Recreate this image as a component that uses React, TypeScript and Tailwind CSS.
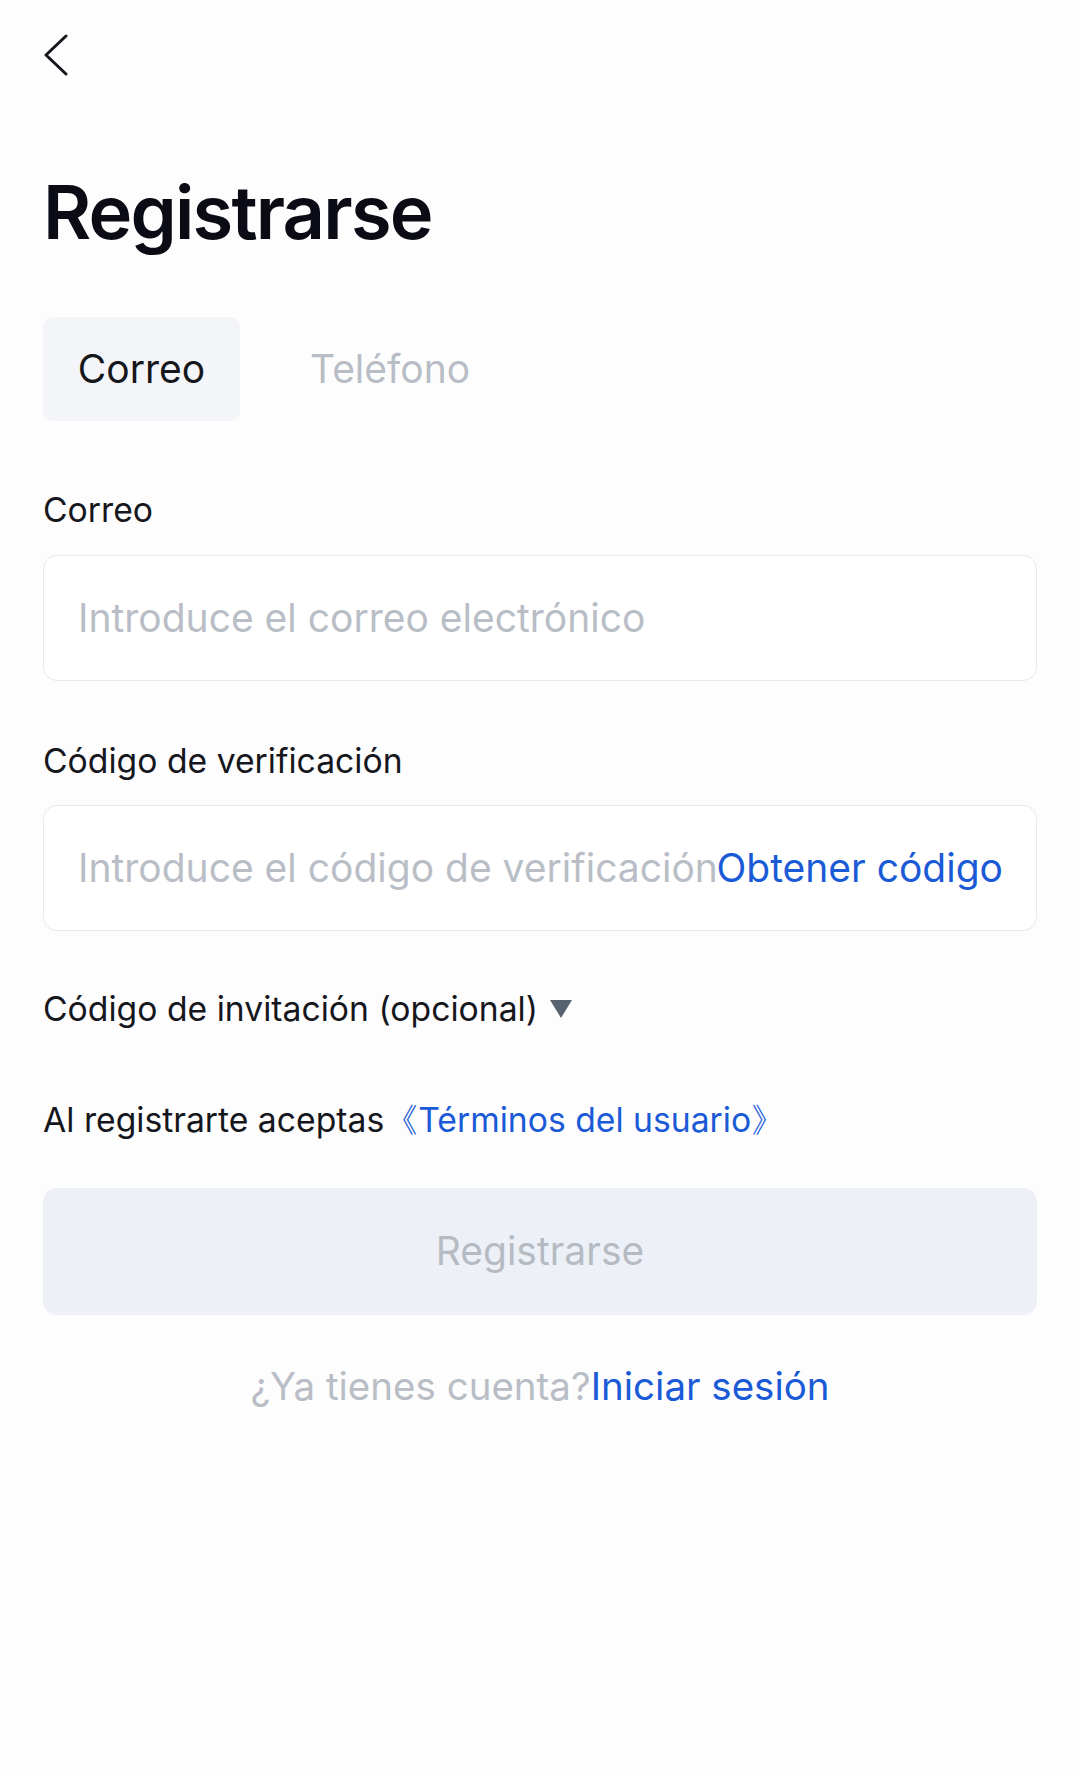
import { useState } from 'react'

const font = { fontFamily: 'Inter, "Noto Sans", sans-serif' }

export default function App() {
  const [tab, setTab] = useState<'email' | 'phone'>('email')

  const labelClass = 'h-[40px] text-[33.7px] leading-[40px] text-[#15171c]'
  const boxClass =
    'flex h-[126px] items-center rounded-[14px] border border-[#e6e8ec] bg-white pl-[34px] pr-[33px]'
  const inputClass =
    'min-w-0 flex-1 bg-transparent text-[39px] text-[#15171c] outline-none placeholder:text-[#b9bec6]'

  return (
    <div className="min-h-[1777px] bg-[#fdfdfe] px-[43px]" style={font}>
      {/* volver */}
      <div className="pt-[34px]">
        <svg width="26" height="42" viewBox="0 0 26 42" fill="none">
          <path
            d="M23 2 L3 21 L23 40"
            stroke="#15171c"
            strokeWidth="3"
            strokeLinecap="round"
            strokeLinejoin="round"
          />
        </svg>
      </div>

      <h1 className="mt-[91px] h-[90px] text-[74px] font-semibold leading-[90px] tracking-[-1.8px] text-[#0a0b14]">
        Registrarse
      </h1>

      {/* pestañas */}
      <div className="mt-[60px] flex items-center">
        <button
          onClick={() => setTab('email')}
          className={`h-[104px] w-[197px] rounded-[10px] text-[39px] ${
            tab === 'email' ? 'bg-[#f3f5f8] text-[#15171c]' : 'text-[#b9bdc5]'
          }`}
        >
          Correo
        </button>
        <button
          onClick={() => setTab('phone')}
          className={`ml-[32px] h-[104px] rounded-[10px] px-[38px] text-[39px] ${
            tab === 'phone' ? 'bg-[#f3f5f8] text-[#15171c]' : 'text-[#b9bdc5]'
          }`}
        >
          Teléfono
        </button>
      </div>

      <div className={`mt-[69px] ${labelClass}`}>Correo</div>
      <div className={`mt-[25px] ${boxClass}`}>
        <input
          className={inputClass}
          placeholder="Introduce el correo electrónico"
          style={font}
        />
      </div>

      <div className={`mt-[60px] ${labelClass}`}>Código de verificación</div>
      <div className={`mt-[24px] ${boxClass}`}>
        <input
          className={inputClass}
          placeholder="Introduce el código de verificación"
          style={font}
        />
        <span className="whitespace-nowrap text-[39px] text-[#1a5ad6]">
          Obtener código
        </span>
      </div>

      <div className={`mt-[58px] flex items-center ${labelClass}`}>
        Código de invitación (opcional)
        <svg className="ml-[11px]" width="24" height="20" viewBox="0 0 24 20">
          <path d="M1 1 H23 L12 19 Z" fill="#586370" />
        </svg>
      </div>

      <div className={`mt-[71px] ${labelClass}`}>
        Al registrarte aceptas
        <span className="text-[#1a5ad6]">《Términos del usuario》</span>
      </div>

      <button className="mt-[48px] flex h-[127px] w-full items-center justify-center rounded-[14px] bg-[#edf1f7] text-[39px] text-[#b6bbc3]">
        Registrarse
      </button>

      <div className="mt-[49px] h-[44px] text-center text-[38.5px] leading-[44px]">
        <span className="text-[#b9bdc5]">¿Ya tienes cuenta?</span>
        <span className="text-[#1a5ad6]">Iniciar sesión</span>
      </div>
    </div>
  )
}
